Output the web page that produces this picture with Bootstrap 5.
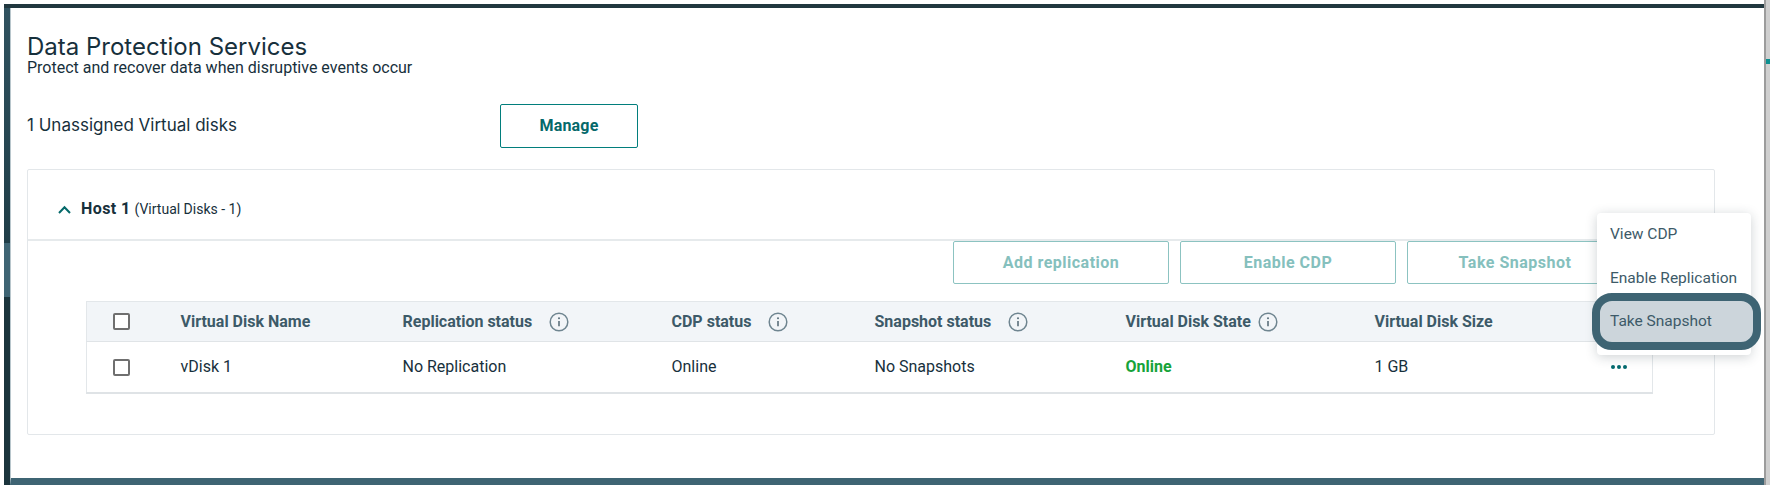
<!DOCTYPE html>
<html lang="en">
<head>
<meta charset="utf-8">
<title>Data Protection Services</title>
<link href="https://cdn.jsdelivr.net/npm/bootstrap@5.3.0/dist/css/bootstrap.min.css" rel="stylesheet">
<style>
html,body{height:100%;}
body{background:#fff;overflow:hidden;font-family:"Roboto","Liberation Sans",sans-serif;color:#17303c;}
.stage{height:485px;width:1770px;padding:4px 0 0 4px;}
.shell{flex:1 1 auto;min-width:0;}
.top-band{height:4px;background:#21383f;flex:none;}
.left-band{width:6px;flex:none;}
.seg-a{height:235px;background:linear-gradient(#30525f,#1f3d47);}
.seg-b{height:54px;background:#3e6473;}
.seg-c{flex:1 1 auto;background:#1b343c;}
.frame{flex:1 1 auto;border-left:1px solid #b8c6cc;border-bottom:7px solid #3e6473;background:#fff;position:relative;padding:26px 0 0 16px;min-width:0;}
.rail{width:6px;flex:none;margin-top:-4px;background:#cfcfcf;border-left:2px solid #9c9c9c;position:relative;}
.rail-tab{position:absolute;left:0;right:0;top:59px;height:5px;background:#0d9090;}
.ttl{font-family:"Inter",sans-serif;font-size:24px;font-weight:400;line-height:26px;color:#17303c;margin:0;}
.sub{font-size:16px;line-height:16px;margin:0;color:#17303c;}
.assign-row{margin-top:28px;height:44px;}
.assign-txt{font-family:"Inter",sans-serif;font-size:17px;width:473px;flex:none;padding-bottom:1px;color:#17303c;}
.btn-manage{width:138px;height:44px;border:1.5px solid #017e7c;border-radius:2px;background:#fff;color:#05696a;font-weight:700;font-size:16px;padding:0;letter-spacing:.2px;}
.host-box{margin-top:21px;width:1688px;height:266px;border:1px solid #e3e7ea;border-radius:2px;}
.host-head{height:71px;padding:9px 0 0 30px;border-bottom:2px solid #e6eaec;gap:10px;}
.host-name{font-weight:700;font-size:16px;letter-spacing:.4px;color:#17303c;}
.host-count{font-size:14px;color:#17303c;}
.act-row{gap:11px;padding-left:925px;height:60px;}
.btn-act{width:216px;height:43px;flex:none;border:1.5px solid #8cc3c1;border-radius:2px;background:#fff;color:#85c0bd;font-weight:700;font-size:16px;letter-spacing:.5px;padding:0;}
.disk-table{margin:0 0 0 58px;width:1567px;table-layout:fixed;border:1px solid #e3e7ea;border-bottom:2px solid #dfe3e6;font-size:16px;}
.disk-table th,.disk-table td{padding:0;vertical-align:middle;border:0;}
.disk-table thead th{height:40px;background:#f2f5f8;border-bottom:1px solid #e0e4e7;font-weight:700;color:#3d5a68;white-space:nowrap;}
.disk-table tbody td{height:51px;padding-top:1px;color:#17303c;}
.disk-table .cell-check{padding-left:26px;}
.box{display:block;width:17px;height:17px;border:2px solid #6f6f6f;border-radius:2px;background:#fff;}
.ico{display:inline-block;vertical-align:-5px;margin-left:3px;}
.ico-far{margin-left:13px;}
.online{color:#16a33a !important;font-weight:700;}
.dots{display:flex;gap:2px;}
.dots i{display:block;width:4px;height:4px;border-radius:50%;background:#036a6e;}
.pop{position:absolute;left:1586px;top:205px;width:154px;height:142px;background:#fff;border-radius:4px;box-shadow:0 2px 12px rgba(30,50,60,.22);z-index:2;}
.pop-item{display:flex;align-items:center;height:44px;padding-left:13px;font-size:15.5px;color:#3d5a68;}
.pop-hi{position:absolute;left:1581px;top:285px;width:169px;height:57px;border:8px solid #3e6473;border-radius:20px;background:#ccd5db;z-index:3;display:flex;align-items:center;padding-left:10px;font-size:15.5px;color:#3d5a68;}
.w-a{width:94px}.w-b{width:222px}.w-c{width:269px}.w-d{width:203px}.w-e{width:251px}.w-f{width:249px}.w-g{width:236px}
</style>
</head>
<body>
<div class="stage d-flex">
  <div class="shell d-flex flex-column">
    <div class="top-band"></div>
    <div class="d-flex flex-grow-1">
      <div class="left-band d-flex flex-column"><div class="seg-a"></div><div class="seg-b"></div><div class="seg-c"></div></div>
      <div class="frame">
        <h1 class="ttl">Data Protection Services</h1>
        <p class="sub">Protect and recover data when disruptive events occur</p>
        <div class="assign-row d-flex align-items-center">
          <div class="assign-txt">1 Unassigned Virtual disks</div>
          <button type="button" class="btn btn-manage">Manage</button>
        </div>
        <div class="host-box">
          <div class="host-head d-flex align-items-center">
            <svg width="13" height="9" viewBox="0 0 13 9" fill="none" stroke="#05696a" stroke-width="2"><path d="M1 8 6.5 2.2 12 8"/></svg>
            <div><span class="host-name">Host 1</span> <span class="host-count">(Virtual Disks - 1)</span></div>
          </div>
          <div class="act-row d-flex">
            <button type="button" class="btn btn-act">Add replication</button>
            <button type="button" class="btn btn-act">Enable CDP</button>
            <button type="button" class="btn btn-act">Take Snapshot</button>
          </div>
          <table class="table disk-table">
            <colgroup><col class="w-a"><col class="w-b"><col class="w-c"><col class="w-d"><col class="w-e"><col class="w-f"><col class="w-g"><col></colgroup>
            <thead>
              <tr>
                <th class="cell-check"><span class="box"></span></th>
                <th>Virtual Disk Name</th>
                <th>Replication status <svg class="ico ico-far" width="20" height="20" viewBox="0 0 20 20" fill="none"><circle cx="10" cy="10" r="8.8" stroke="#6f8590" stroke-width="1.5"/><path d="M10 9v5.2" stroke="#5a6f7a" stroke-width="1.6"/><circle cx="10" cy="6.2" r="1" fill="#5a6f7a"/></svg></th>
                <th>CDP status <svg class="ico ico-far" width="20" height="20" viewBox="0 0 20 20" fill="none"><circle cx="10" cy="10" r="8.8" stroke="#6f8590" stroke-width="1.5"/><path d="M10 9v5.2" stroke="#5a6f7a" stroke-width="1.6"/><circle cx="10" cy="6.2" r="1" fill="#5a6f7a"/></svg></th>
                <th>Snapshot status <svg class="ico ico-far" width="20" height="20" viewBox="0 0 20 20" fill="none"><circle cx="10" cy="10" r="8.8" stroke="#6f8590" stroke-width="1.5"/><path d="M10 9v5.2" stroke="#5a6f7a" stroke-width="1.6"/><circle cx="10" cy="6.2" r="1" fill="#5a6f7a"/></svg></th>
                <th>Virtual Disk State <svg class="ico" width="20" height="20" viewBox="0 0 20 20" fill="none"><circle cx="10" cy="10" r="8.8" stroke="#6f8590" stroke-width="1.5"/><path d="M10 9v5.2" stroke="#5a6f7a" stroke-width="1.6"/><circle cx="10" cy="6.2" r="1" fill="#5a6f7a"/></svg></th>
                <th>Virtual Disk Size</th>
                <th></th>
              </tr>
            </thead>
            <tbody>
              <tr>
                <td class="cell-check"><span class="box"></span></td>
                <td>vDisk 1</td>
                <td>No Replication</td>
                <td>Online</td>
                <td>No Snapshots</td>
                <td class="online">Online</td>
                <td>1 GB</td>
                <td><span class="dots"><i></i><i></i><i></i></span></td>
              </tr>
            </tbody>
          </table>
        </div>
        <div class="pop">
          <div class="pop-item">View CDP</div>
          <div class="pop-item">Enable Replication</div>
        </div>
        <div class="pop-hi">Take Snapshot</div>
      </div>
    </div>
  </div>
  <div class="rail"><span class="rail-tab"></span></div>
</div>
<script src="https://cdn.jsdelivr.net/npm/bootstrap@5.3.0/dist/js/bootstrap.bundle.min.js"></script>
</body>
</html>
